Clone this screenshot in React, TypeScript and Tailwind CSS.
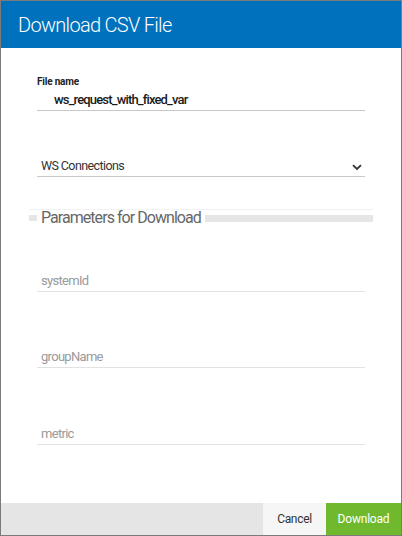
import React from "react";

const Field: React.FC<{ placeholder: string; className?: string }> = ({ placeholder, className }) => (
  <div className={`border-b border-[#e2e2e2] h-[26px] flex items-end pb-[4px] pl-[4px] ${className ?? ""}`}>
    <span className="text-[13px] text-[#9a9a9a] leading-none tracking-[-0.7px]">{placeholder}</span>
  </div>
);

export default function App() {
  return (
    <div
      className="w-[402px] h-[536px] border border-[#7b7b7b] bg-white flex flex-col"
      style={{ fontFamily: "Roboto, 'Liberation Sans', sans-serif" }}
    >
      {/* header */}
      <div className="h-[47px] bg-[#0071bc] flex items-center pl-[17px] shrink-0">
        <h1 className="text-white text-[20px] font-light tracking-[-0.7px]">Download CSV File</h1>
      </div>

      {/* body */}
      <div className="flex-1 px-[36px] pt-[29px]">
        <div>
          <div className="text-[10px] font-bold text-[#222] leading-none tracking-[-0.2px]">File name</div>
          <div className="border-b border-[#c8c8c8] h-[24px] flex items-end pb-[4px] pl-[17px]">
            <span className="text-[13px] font-medium text-[#1a1a1a] leading-none tracking-[-0.85px]">ws_request_with_fixed_var</span>
          </div>
        </div>

        <div className="mt-[42px] border-b border-[#c8c8c8] h-[24px] flex items-end justify-between pb-[4px] pl-[4px]">
          <span className="text-[12.5px] text-[#333] leading-none tracking-[-0.6px]">WS Connections</span>
          <svg width="10" height="7" viewBox="0 0 10 7" className="mr-[3px] mb-[1px]">
            <path d="M1 1.2 L5 5 L9 1.2" fill="none" stroke="#333" strokeWidth="1.8" />
          </svg>
        </div>

        {/* fieldset legend */}
        <div className="mt-[33px] -mx-[8px] relative">
          <div className="absolute left-0 right-0 top-[-1px] border-t border-[#f2f2f2]" />
          <div className="flex items-center gap-[4px]">
            <div className="w-[8px] h-[6px] bg-[#e6e6e6]" />
            <span className="text-[16px] text-[#666] leading-none tracking-[-0.95px]">Parameters for Download</span>
            <div className="flex-1 h-[7px] bg-[#e6e6e6]" />
          </div>
        </div>

        <Field placeholder="systemId" className="mt-[40px]" />
        <Field placeholder="groupName" className="mt-[50px]" />
        <Field placeholder="metric" className="mt-[51px]" />
      </div>

      {/* footer */}
      <div className="h-[32px] bg-[#e5e5e5] flex justify-end shrink-0">
        <button className="w-[63px] bg-[#f6f6f6] text-[12px] text-[#333] tracking-[-0.3px]">Cancel</button>
        <button className="w-[75px] bg-[#70b92e] text-[12px] text-white tracking-[-0.2px]">Download</button>
      </div>
    </div>
  );
}
